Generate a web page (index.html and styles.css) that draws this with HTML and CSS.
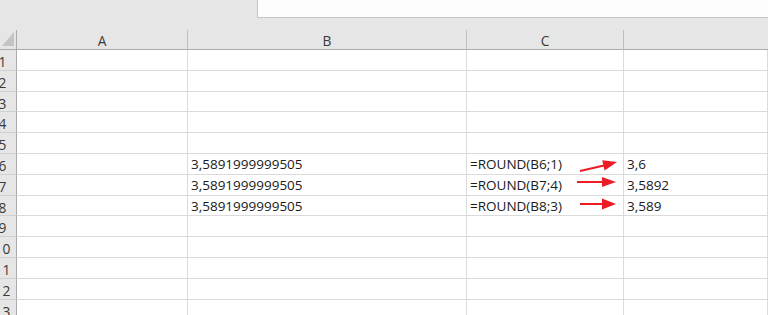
FILE: index.html
```html
<!DOCTYPE html>
<html lang="en">
<head>
    <meta charset="UTF-8">
    <title>Sheet</title>
    <link rel="stylesheet" href="styles.css">
</head>
<body>
    <div class="toolbar">
        <div class="formula-bar"></div>
    </div>
    <div class="sheet">
        <div class="corner"><span class="corner-mark"></span></div>
        <div class="col-head">A</div>
        <div class="col-head">B</div>
        <div class="col-head">C</div>
        <div class="col-head last"></div>

        <div class="row-head">1</div><div class="cell"></div><div class="cell"></div><div class="cell"></div><div class="cell"></div>
        <div class="row-head">2</div><div class="cell"></div><div class="cell"></div><div class="cell"></div><div class="cell"></div>
        <div class="row-head">3</div><div class="cell"></div><div class="cell"></div><div class="cell"></div><div class="cell"></div>
        <div class="row-head">4</div><div class="cell"></div><div class="cell"></div><div class="cell"></div><div class="cell"></div>
        <div class="row-head">5</div><div class="cell"></div><div class="cell"></div><div class="cell"></div><div class="cell"></div>
        <div class="row-head">6</div><div class="cell"></div><div class="cell">3,5891999999505</div><div class="cell">=ROUND(B6;1)</div><div class="cell">3,6</div>
        <div class="row-head">7</div><div class="cell"></div><div class="cell">3,5891999999505</div><div class="cell">=ROUND(B7;4)</div><div class="cell">3,5892</div>
        <div class="row-head">8</div><div class="cell"></div><div class="cell">3,5891999999505</div><div class="cell">=ROUND(B8;3)</div><div class="cell">3,589</div>
        <div class="row-head">9</div><div class="cell"></div><div class="cell"></div><div class="cell"></div><div class="cell"></div>
        <div class="row-head">10</div><div class="cell"></div><div class="cell"></div><div class="cell"></div><div class="cell"></div>
        <div class="row-head">11</div><div class="cell"></div><div class="cell"></div><div class="cell"></div><div class="cell"></div>
        <div class="row-head">12</div><div class="cell"></div><div class="cell"></div><div class="cell"></div><div class="cell"></div>
        <div class="row-head">13</div><div class="cell"></div><div class="cell"></div><div class="cell"></div><div class="cell"></div>
    </div>

    <!-- hand-drawn arrows over the sheet -->
    <svg class="arrows" width="768" height="315" viewBox="0 0 768 315">
        <g fill="#ed1c24" stroke="#ed1c24">
            <line x1="580" y1="171" x2="604" y2="165.5" stroke-width="2"/>
            <polygon points="617,162 604.6,170.6 602.2,160.2" stroke="none"/>
            <line x1="577" y1="182" x2="603" y2="182" stroke-width="2"/>
            <polygon points="616,182 602,177 602,187" stroke="none"/>
            <line x1="580" y1="204" x2="603" y2="204" stroke-width="2"/>
            <polygon points="616,204 602,198.5 602,209.5" stroke="none"/>
        </g>
    </svg>
</body>
</html>
```

FILE: styles.css
```css
* {
    margin: 0;
    padding: 0;
    box-sizing: border-box;
}

body {
    font-family: "Open Sans", "Liberation Sans", sans-serif;
    background: #e6e6e6;
    width: 768px;
    height: 315px;
    overflow: hidden;
    position: relative;
}

.toolbar {
    height: 30px;
    padding-left: 257px;
}

.formula-bar {
    height: 18px;
    background: #fdfdfd;
    border-left: 1px solid #c6c6c6;
    border-bottom: 1px solid #c6c6c6;
}

.sheet {
    margin-left: -11px;
    width: 779px;
    display: grid;
    grid-template-columns: 28px 171px 279px 157px 1fr;
    grid-template-rows: 20px;
    grid-auto-rows: 20.8px;
    background: #fff;
}

.corner,
.col-head {
    background: #e6e6e6;
    border-bottom: 1px solid #ababab;
    border-right: 1px solid #bfbfbf;
}

.corner {
    position: relative;
    border-right-color: #ababab;
}

.corner-mark {
    position: absolute;
    right: 2px;
    bottom: 3px;
    width: 0;
    height: 0;
    border-left: 12px solid transparent;
    border-bottom: 14px solid #c4c4c4;
}

.col-head {
    font-size: 13.8px;
    color: #3a3a3a;
    display: flex;
    align-items: center;
    justify-content: center;
    padding-top: 1px;
}

.col-head.last {
    border-right: none;
}

.row-head {
    background: #e6e6e6;
    border-right: 1px solid #ababab;
    border-bottom: 1px solid #d0d0d0;
    font-size: 13.8px;
    color: #3a3a3a;
    display: flex;
    align-items: flex-end;
    justify-content: center;
    padding-bottom: 1px;
    line-height: 1;
}

.cell {
    border-right: 1px solid #dadada;
    border-bottom: 1px solid #dadada;
    font-size: 13.5px;
    color: #1a1a1a;
    display: flex;
    align-items: flex-end;
    padding: 0 0 2px 3px;
    line-height: 1;
    white-space: nowrap;
}

.arrows {
    position: absolute;
    left: 0;
    top: 0;
    pointer-events: none;
}
```
